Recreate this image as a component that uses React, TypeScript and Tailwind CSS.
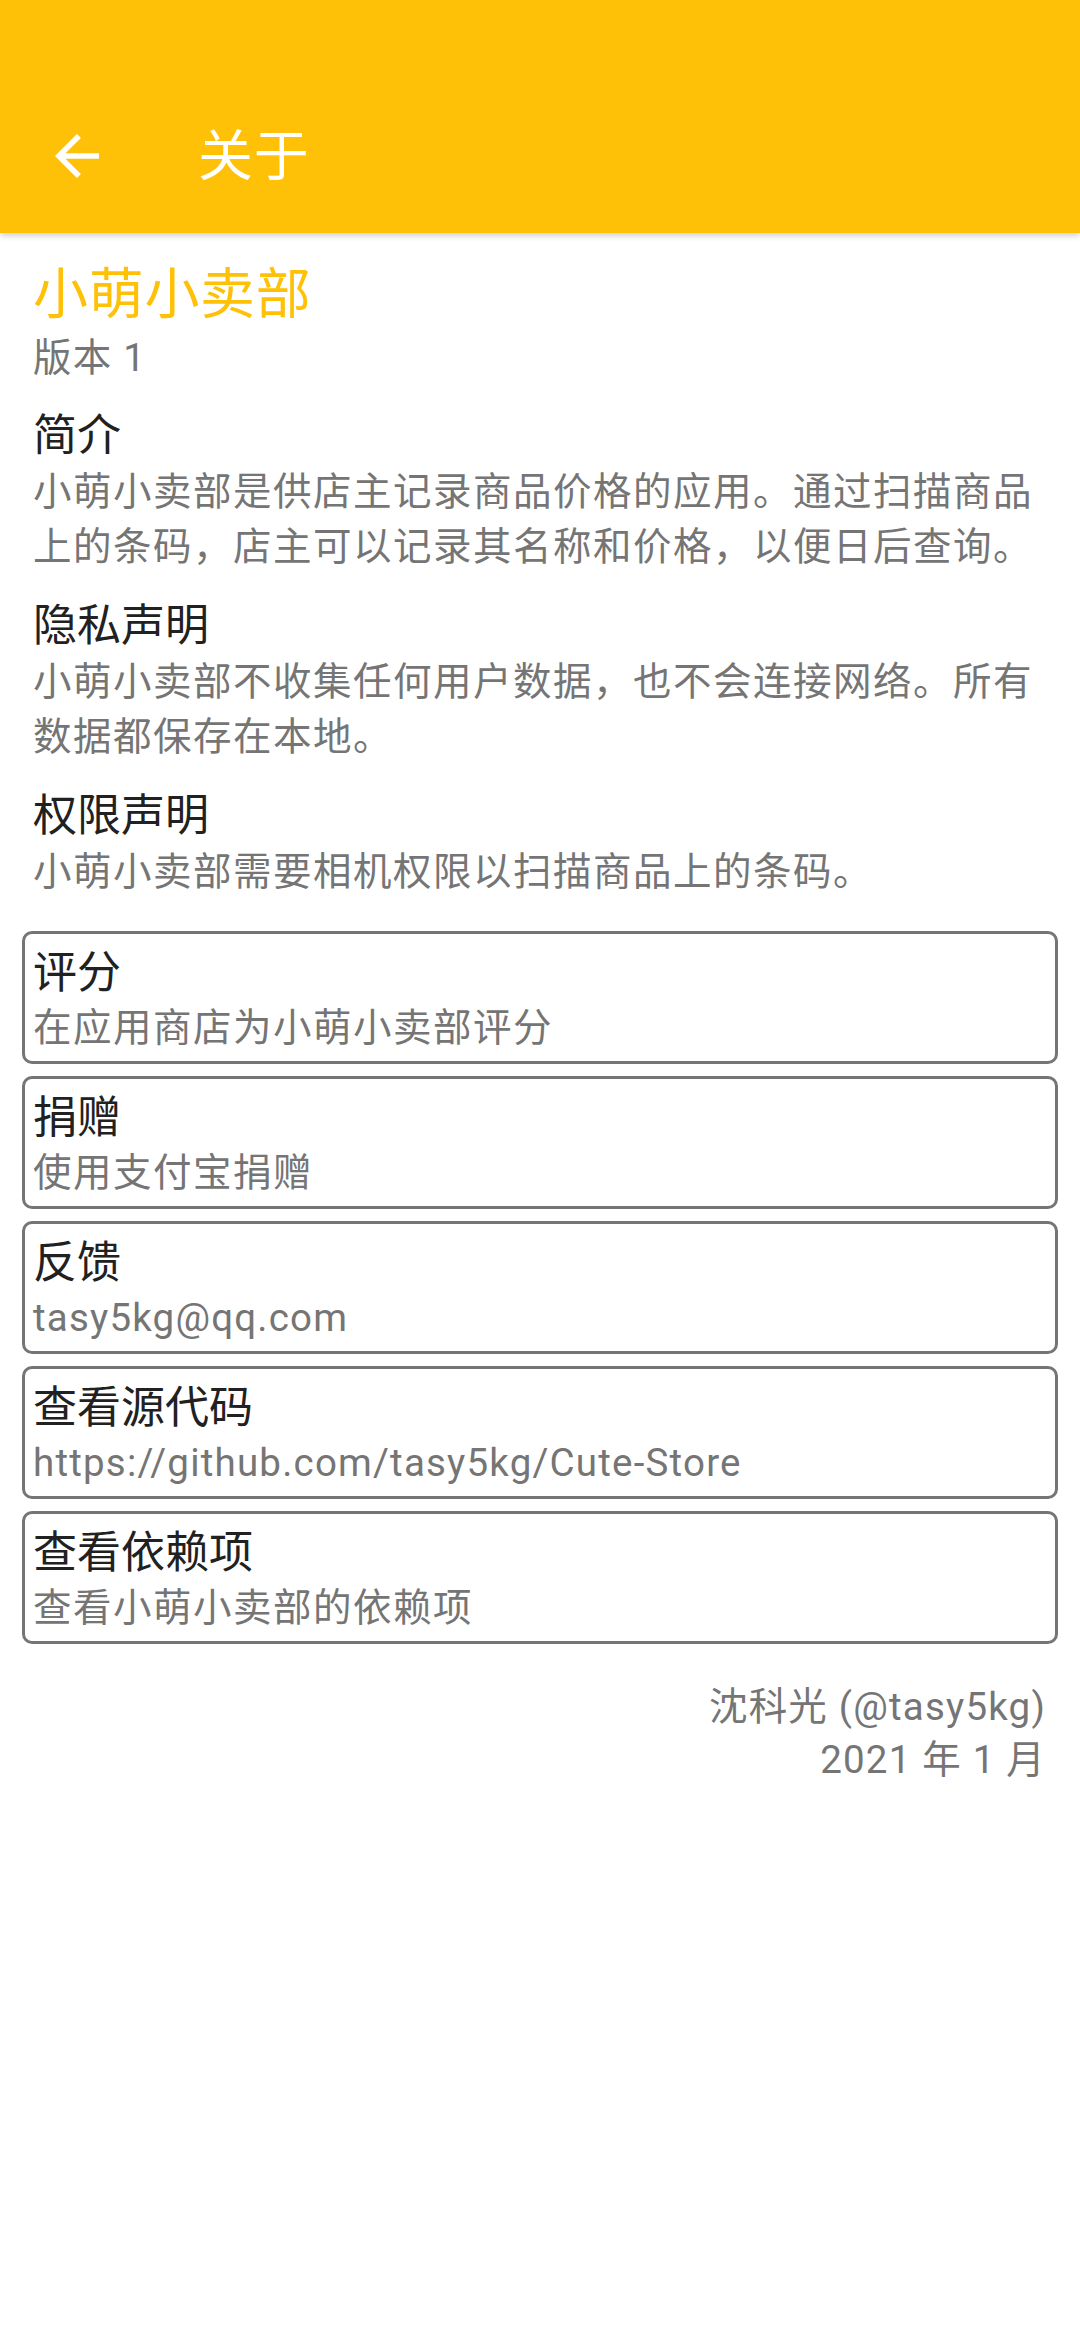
import React from 'react'

const cards = [
  { title: '评分', subtitle: '在应用商店为小萌小卖部评分', latin: false },
  { title: '捐赠', subtitle: '使用支付宝捐赠', latin: false },
  { title: '反馈', subtitle: 'tasy5kg@qq.com', latin: true },
  { title: '查看源代码', subtitle: 'https://github.com/tasy5kg/Cute-Store', latin: true },
  { title: '查看依赖项', subtitle: '查看小萌小卖部的依赖项', latin: false },
]

const sections = [
  {
    title: '简介',
    body: '小萌小卖部是供店主记录商品价格的应用。通过扫描商品上的条码，店主可以记录其名称和价格，以便日后查询。',
  },
  {
    title: '隐私声明',
    body: '小萌小卖部不收集任何用户数据，也不会连接网络。所有数据都保存在本地。',
  },
  {
    title: '权限声明',
    body: '小萌小卖部需要相机权限以扫描商品上的条码。',
  },
]

function BackArrow() {
  return (
    <svg width="66" height="66" viewBox="0 0 24 24" fill="#ffffff">
      <path d="M20 11H7.83l5.59-5.59L12 4l-8 8 8 8 1.41-1.41L7.83 13H20v-2z" />
    </svg>
  )
}

export default function App() {
  return (
    <div
      className="w-[1080px] min-h-[2340px] bg-white"
      style={{ fontFamily: 'Roboto, "Noto Sans CJK SC", sans-serif' }}
    >
      <header className="relative z-10 h-[233px] bg-[#FFC107] shadow-[0_3px_6px_rgba(0,0,0,0.18)] flex flex-col">
        <div className="h-[79px]" />
        <div className="h-[154px] flex items-center">
          <div className="w-[198px] shrink-0 pl-[44px] flex items-center">
            <BackArrow />
          </div>
          <h1 className="text-[55px] leading-[64px] text-white tracking-[0.7px]">关于</h1>
        </div>
      </header>

      <main className="flex flex-col">
        <div className="px-[33px] pt-[29px] flex flex-col">
          <div className="text-[55px] leading-[64px] text-[#FFC107] tracking-[0.7px]">小萌小卖部</div>
          <div className="text-[38.5px] leading-[63px] text-[#757575] tracking-[1.2px]">版本 1</div>

          {sections.map((s, i) => (
            <section key={s.title} className={i === 0 ? 'mt-[21px]' : 'mt-[26px]'}>
              <h2 className="text-[44px] leading-[52px] text-[#212121]">{s.title}</h2>
              <p className="pt-[2px] text-[38.5px] leading-[55px] text-[#757575] tracking-[1.5px]">{s.body}</p>
            </section>
          ))}
        </div>

        <div className="px-[22px] mt-[32px] flex flex-col gap-[12px]">
          {cards.map((c) => (
            <div
              key={c.title}
              className="h-[133px] border-[3px] border-[#757575] rounded-[10px] px-[8px] pt-[12px] pb-[5px] flex flex-col"
            >
              <div className="text-[44px] leading-[54px] text-[#212121]">{c.title}</div>
              <div
                className={
                  c.latin
                    ? 'text-[38.5px] leading-[56px] text-[#757575] tracking-[1.2px]'
                    : 'text-[38.5px] leading-[56px] text-[#757575] tracking-[1.5px]'
                }
              >
                {c.subtitle}
              </div>
            </div>
          ))}
        </div>

        <footer className="mt-[36px] pr-[34px] flex flex-col items-end text-[38.5px] leading-[53px] text-[#757575] tracking-[1.2px]">
          <div>沈科光 (@tasy5kg)</div>
          <div>2021 年 1 月</div>
        </footer>
      </main>
    </div>
  )
}
